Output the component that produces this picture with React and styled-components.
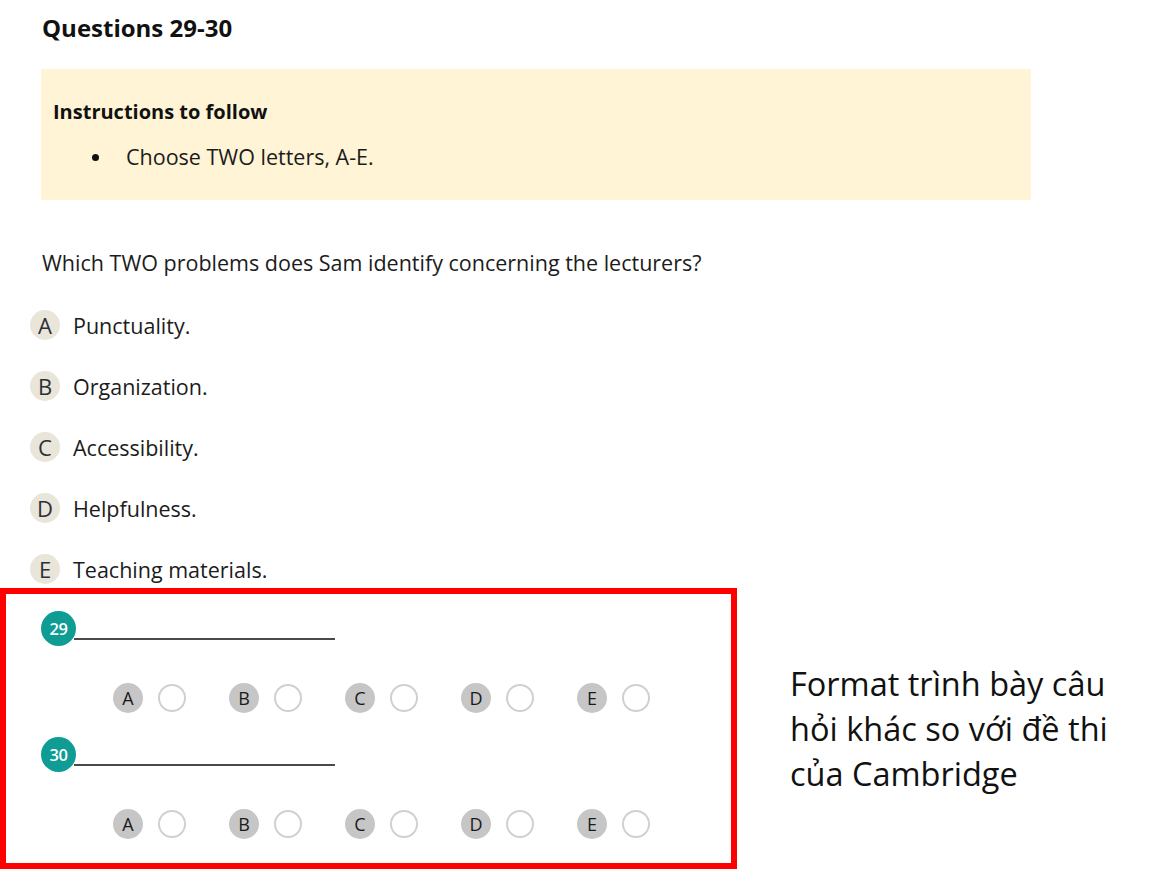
import styled, { createGlobalStyle } from "styled-components";

const GlobalStyle = createGlobalStyle`
  html, body {
    margin: 0;
    padding: 0;
    background: #ffffff;
  }
  body {
    font-family: "Open Sans", "Noto Sans", sans-serif;
    color: #1c1c1c;
  }
`;

const Page = styled.div`
  width: 1165px;
  height: 870px;
  overflow: hidden;
  display: flex;
  flex-direction: column;
`;

const Top = styled.div`
  padding: 12px 0 0 42px;
`;

const Title = styled.h2`
  margin: 0;
  font-size: 24px;
  line-height: 32px;
  font-weight: 700;
  color: #111;
`;

const Instructions = styled.div`
  margin: 25px 0 0 -1px;
  width: 990px;
  height: 131px;
  box-sizing: border-box;
  background: #fff4d6;
  padding: 30px 0 0 12px;
`;

const InstrHeading = styled.div`
  font-size: 20px;
  line-height: 26px;
  font-weight: 700;
  color: #111;
`;

const BulletList = styled.ul`
  margin: 19px 0 0;
  padding: 0;
  list-style: none;
`;

const Bullet = styled.li`
  display: flex;
  align-items: center;
  font-size: 21.5px;
  line-height: 26px;
  color: #1c1c1c;

  &::before {
    content: "";
    width: 7px;
    height: 7px;
    border-radius: 50%;
    background: #111;
    margin: 0 27px 0 39px;
  }
`;

const Question = styled.p`
  margin: 50px 0 0;
  font-size: 21.5px;
  line-height: 26px;
  color: #1c1c1c;
`;

const Options = styled.div`
  margin: 34px 0 0 -12px;
  display: flex;
  flex-direction: column;
  gap: 31px;
`;

const Option = styled.div`
  display: flex;
  align-items: center;
  gap: 13px;
  height: 30px;
`;

const OptionLetter = styled.span`
  width: 30px;
  height: 30px;
  border-radius: 50%;
  background: #e9e5d9;
  display: flex;
  align-items: center;
  justify-content: center;
  font-size: 22px;
  color: #2a3038;
`;

const OptionText = styled.span`
  font-size: 21.5px;
  color: #1c1c1c;
`;

const Bottom = styled.div`
  margin-top: 4px;
  display: flex;
  align-items: flex-start;
`;

const AnswerBox = styled.div`
  width: 737px;
  height: 281px;
  box-sizing: border-box;
  border: 6px solid #ff0000;
  padding: 17px 0 0 35px;
  display: flex;
  flex-direction: column;
`;

const AnswerLine = styled.div`
  display: flex;
  align-items: flex-end;
`;

const Badge = styled.span`
  width: 35px;
  height: 35px;
  border-radius: 50%;
  background: #0e9c95;
  color: #ffffff;
  font-weight: 600;
  font-size: 16.5px;
  letter-spacing: -0.5px;
  display: flex;
  align-items: center;
  justify-content: center;
  flex: none;
`;

const Blank = styled.span`
  width: 261px;
  margin-left: -2px;
  margin-bottom: 6px;
  border-bottom: 2px solid #4a4a4a;
`;

const ChoiceRow = styled.div`
  display: flex;
  margin: 37px 0 24px 72px;
`;

const Choice = styled.div`
  display: flex;
  align-items: center;
  gap: 15px;
  width: 116px;
`;

const ChoiceLetter = styled.span`
  width: 30px;
  height: 30px;
  border-radius: 50%;
  background: #c6c6c6;
  color: #1a1a1a;
  font-size: 18px;
  font-weight: 500;
  display: flex;
  align-items: center;
  justify-content: center;
`;

const Radio = styled.span`
  width: 24px;
  height: 24px;
  border-radius: 50%;
  border: 2px solid #d0d0d0;
`;

const Note = styled.div`
  padding: 73px 0 0 53px;
  font-size: 32.5px;
  line-height: 45px;
  color: #111;
  width: 340px;
`;

const letters = ["A", "B", "C", "D", "E"];

const options = [
  ["A", "Punctuality."],
  ["B", "Organization."],
  ["C", "Accessibility."],
  ["D", "Helpfulness."],
  ["E", "Teaching materials."],
];

const AnswerItem = ({ number }) => (
  <>
    <AnswerLine>
      <Badge>{number}</Badge>
      <Blank />
    </AnswerLine>
    <ChoiceRow>
      {letters.map((l) => (
        <Choice key={l}>
          <ChoiceLetter>{l}</ChoiceLetter>
          <Radio />
        </Choice>
      ))}
    </ChoiceRow>
  </>
);

export default function App() {
  return (
    <Page>
      <GlobalStyle />
      <Top>
        <Title>Questions 29-30</Title>
        <Instructions>
          <InstrHeading>Instructions to follow</InstrHeading>
          <BulletList>
            <Bullet>Choose TWO letters, A-E.</Bullet>
          </BulletList>
        </Instructions>
        <Question>
          Which TWO problems does Sam identify concerning the lecturers?
        </Question>
        <Options>
          {options.map(([l, text]) => (
            <Option key={l}>
              <OptionLetter>{l}</OptionLetter>
              <OptionText>{text}</OptionText>
            </Option>
          ))}
        </Options>
      </Top>
      <Bottom>
        <AnswerBox>
          <AnswerItem number="29" />
          <AnswerItem number="30" />
        </AnswerBox>
        <Note>
          Format trình bày câu hỏi khác so với đề thi của Cambridge
        </Note>
      </Bottom>
    </Page>
  );
}
